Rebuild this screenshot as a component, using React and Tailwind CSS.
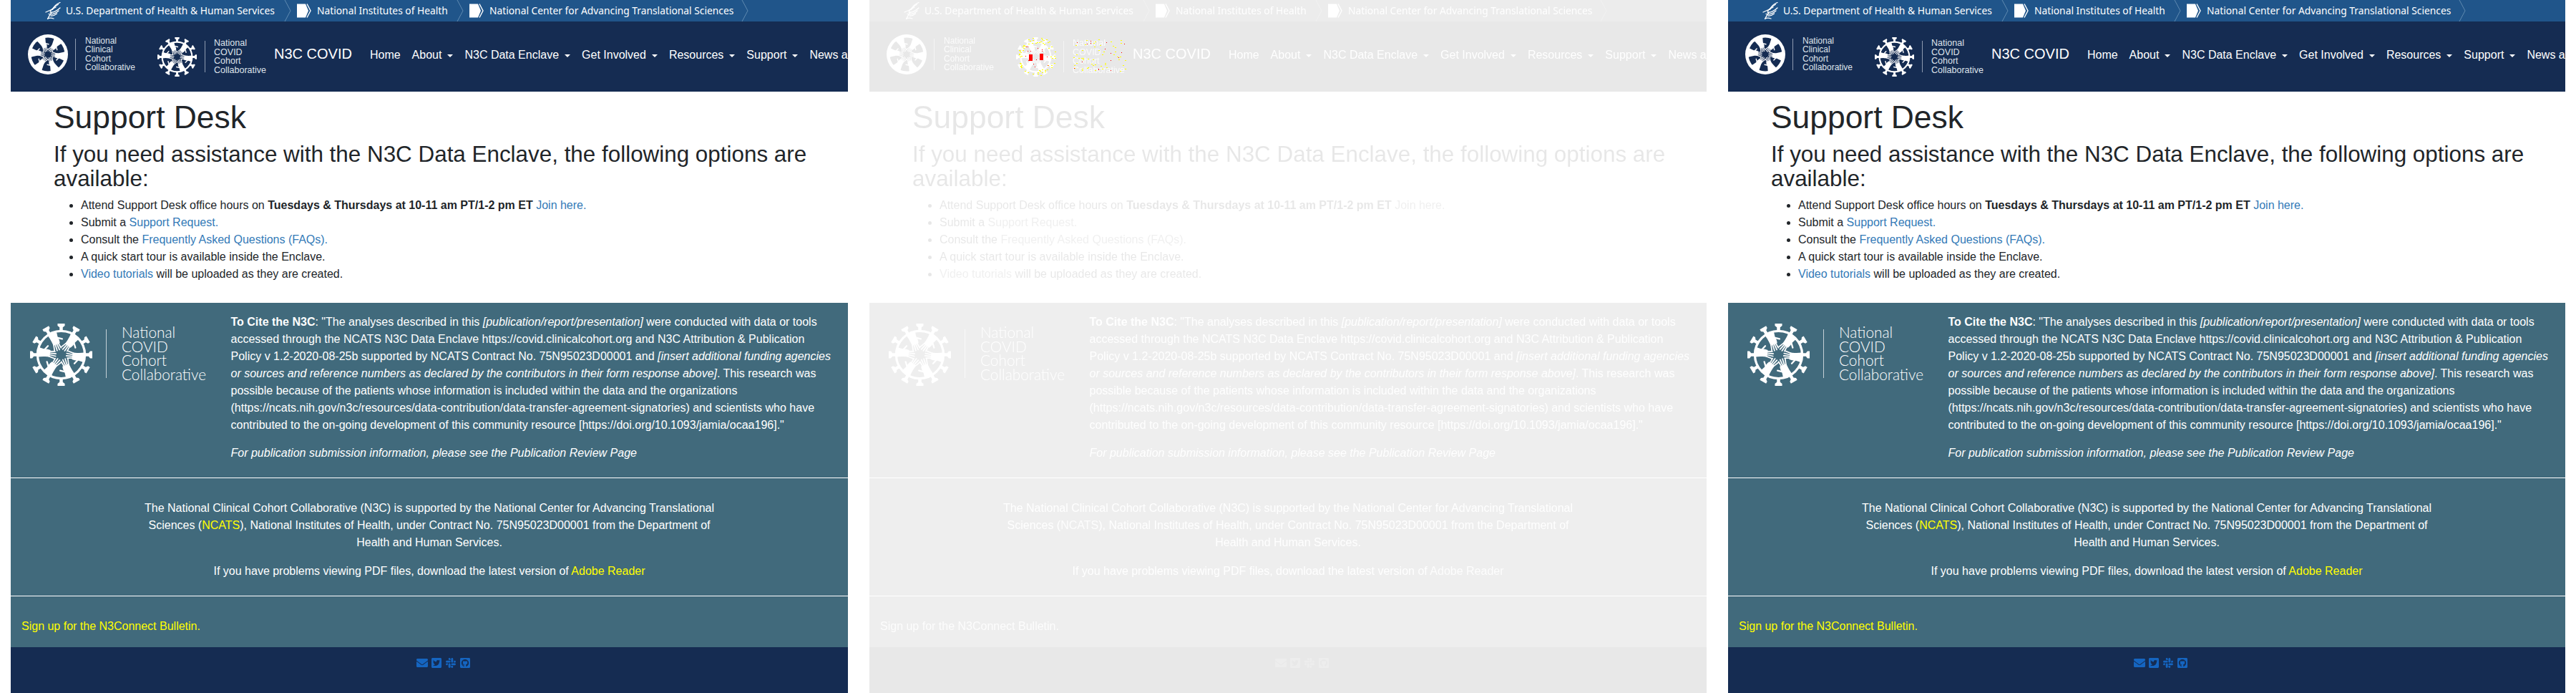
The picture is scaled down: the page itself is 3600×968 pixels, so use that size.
import React from "react";
import { FaEnvelope, FaTwitterSquare, FaSlack, FaGithubSquare } from "react-icons/fa";

const navLinks = [
  { label: "Home" },
  { label: "About", caret: true },
  { label: "N3C Data Enclave", caret: true },
  { label: "Get Involved", caret: true },
  { label: "Resources", caret: true },
  { label: "Support", caret: true },
  { label: "News and Events", caret: true },
];

const Hand = ({ angle, arm }) => (
  <g transform={`rotate(${angle})`}>
    <path d={arm} fill="currentColor" />
    <g stroke="currentColor" strokeWidth="2" strokeLinecap="round" fill="none">
      <path d="M20 -5 L10 -7.5" />
      <path d="M20 -2.5 L8.5 -3.5" />
      <path d="M20 0 L8.5 0.5" />
      <path d="M20 2.5 L10.5 4" />
      <path d="M28 4 L23 11" strokeWidth="2.6" />
    </g>
  </g>
);

const handAngles = [8, 68, 128, 188, 248, 308];

const HandsMark = ({ className }) => (
  <svg viewBox="-50 -50 100 100" className={className}>
    <circle r="50" fill="currentColor" />
    <circle r="42" className="fill-[#152c52]" />
    {handAngles.map((a) => (
      <Hand key={a} angle={a} arm="M46 -15 L46 11 L30 6 Q23 7 18 5 L18 -6 L26 -7 Q36 -10 46 -15 Z" />
    ))}
  </svg>
);

const VirusMark = ({ className }) => {
  const spikes = [0, 30, 60, 90, 120, 150, 180, 210, 240, 270, 300, 330];
  return (
    <svg viewBox="-50 -50 100 100" className={className}>
      <circle r="38" fill="none" stroke="currentColor" strokeWidth="3.8" />
      {spikes.map((a) => (
        <g key={a} transform={`rotate(${a})`} fill="currentColor">
          <path d="M-2.6 -38 L-2.6 -44 L-5.8 -46.5 L-5.8 -50 L5.8 -50 L5.8 -46.5 L2.6 -44 L2.6 -38 Z" />
        </g>
      ))}
      {handAngles.map((a) => (
        <Hand key={a} angle={a} arm="M38 -9 L38 7 L29 5.5 Q22 6.5 18 5 L18 -6 L25 -6.5 Q31 -7 38 -9 Z" />
      ))}
    </svg>
  );
};

const Eagle = () => (
  <svg viewBox="0 0 22 24" className="w-[22px] h-[24px] shrink-0" fill="none" stroke="white" strokeWidth="1.3" strokeLinecap="round">
    <path d="M21 0.5 C16 2.5 12 6 10.5 10.5" />
    <path d="M18.5 3 C14.5 5.5 10 9 7.5 12.5" />
    <path d="M15 7 C11 9.5 6 12 1 14" />
    <path d="M7 14 C11 15 16 12.5 21 8" />
    <path d="M5 16.5 C10 18 15 15.5 19 12" />
    <path d="M8 19 C11 19.5 14 18 16.5 16" />
    <path d="M9 14.5 C6 18 5 21 3.5 23.5" />
    <path d="M4 23 C7 21.5 9 22 12 23" />
  </svg>
);

const NihMark = () => (
  <svg viewBox="0 0 20 20" className="w-[20px] h-[20px] shrink-0">
    <path d="M0 0.5 H12 L16 10 L12 19.5 H0 Z" fill="white" />
    <path d="M14 0.5 L19 10 L14 19.5" fill="none" stroke="white" strokeWidth="1.4" />
  </svg>
);

const Crumb = () => (
  <svg viewBox="0 0 10 30" className="w-[10px] h-[30px] shrink-0 ml-[12px] mr-[8px]">
    <path d="M1 0 L9 15 L1 30" fill="none" stroke="#5f8ab0" strokeWidth="1" />
  </svg>
);

const GovBanner = () => (
  <div className="h-[30px] bg-[#20558a] flex items-center pl-[48px] text-white text-[13.8px] font-['Noto_Sans',sans-serif] whitespace-nowrap overflow-hidden">
    <Eagle />
    <span className="ml-[7px] w-[293px]">U.S. Department of Health &amp; Human Services</span>
    <Crumb />
    <NihMark />
    <span className="ml-[8px] w-[183px]">National Institutes of Health</span>
    <Crumb />
    <NihMark />
    <span className="ml-[8px] w-[340px]">National Center for Advancing Translational Sciences</span>
    <Crumb />
  </div>
);

const LogoText = ({ className }) => (
  <div className={className}>
    <div>National</div>
    <div>COVID</div>
    <div>Cohort</div>
    <div>Collaborative</div>
  </div>
);

const Navbar = () => (
  <div className="h-[98px] bg-[#152c52] flex items-center whitespace-nowrap overflow-hidden text-white">
    {/* clinical logo */}
    <div className="flex items-center ml-[24px] mb-[7px] shrink-0">
      <HandsMark className="w-[56px] h-[56px] text-white" />
      <div className="w-px h-[44px] bg-[#8d9ab0] ml-[10px]" />
      <div className="ml-[13px] text-[12px] leading-[12.5px] text-[#dfe3ea]">
        <div>National</div>
        <div>Clinical</div>
        <div>Cohort</div>
        <div>Collaborative</div>
      </div>
    </div>
    {/* covid logo */}
    <div className="flex items-center ml-[31px] shrink-0">
      <VirusMark className="w-[55px] h-[55px] text-white" />
      <div className="w-px h-[44px] bg-[#8d9ab0] ml-[11px]" />
      <LogoText className="ml-[12px] text-[12.5px] leading-[12.5px] text-[#dfe3ea]" />
    </div>
    <a className="ml-[11px] mb-[8px] text-[20px] leading-[30px] shrink-0">N3C COVID</a>
    <ul className="flex ml-[17px] mb-[4px] text-[16px] leading-[24px]">
      {navLinks.map((link) => (
        <li key={link.label} className="px-[8px] flex items-center">
          {link.label}
          {link.caret && (
            <span className="ml-[8px] mt-[1px] w-0 h-0 border-x-[4.5px] border-x-transparent border-t-[4.5px] border-t-white" />
          )}
        </li>
      ))}
    </ul>
  </div>
);

const SupportDesk = () => (
  <div className="px-[60px] pt-[11.5px] h-[295px] text-[#212529]">
    <h1 className="text-[44.4px] leading-[48px] mb-[11.3px]">Support Desk</h1>
    <h3 className="text-[31.4px] leading-[34px] mb-[8.7px] -mr-[30px]">
      If you need assistance with the N3C Data Enclave, the following options are available:
    </h3>
    <ul className="list-disc pl-[38px] text-[16px] leading-[24px]">
      <li>
        Attend Support Desk office hours on <b>Tuesdays &amp; Thursdays at 10-11 am PT/1-2 pm ET</b>{" "}
        <a className="text-[#337ab7]">Join here.</a>
      </li>
      <li>
        Submit a <a className="text-[#337ab7]">Support Request.</a>
      </li>
      <li>
        Consult the <a className="text-[#337ab7]">Frequently Asked Questions (FAQs).</a>
      </li>
      <li>A quick start tour is available inside the Enclave.</li>
      <li>
        <a className="text-[#337ab7]">Video tutorials</a> will be uploaded as they are created.
      </li>
    </ul>
  </div>
);

const Footer = () => (
  <div className="text-white text-[16px] leading-[24px]">
    <div className="bg-[#416a7c]">
      {/* citation */}
      <div className="h-[244px] grid grid-cols-[307.5px_847.5px] pt-[15px]">
        <div className="flex items-start pl-[27px] pt-[14px]">
          <VirusMark className="w-[87px] h-[87px] text-white shrink-0" />
          <div className="w-px h-[68px] bg-[#c4d0d6] ml-[19px] mt-[8px]" />
          <LogoText className="ml-[21px] mt-[2px] font-['Lato',sans-serif] font-light text-[20.8px] leading-[19.7px]" />
        </div>
        <div>
          <p className="mb-[15px]">
            <b>To Cite the N3C</b>: "The analyses described in this <i>[publication/report/presentation]</i> were
            conducted with data or tools accessed through the NCATS N3C Data Enclave https://covid.clinicalcohort.org
            and N3C Attribution &amp; Publication Policy v 1.2-2020-08-25b supported by NCATS Contract No. 75N95023D00001
            and <i>[insert additional funding agencies or sources and reference numbers as declared by the contributors
            in their form response above]</i>. This research was possible because of the patients whose information is
            included within the data and the organizations
            (https://ncats.nih.gov/n3c/resources/data-contribution/data-transfer-agreement-signatories) and scientists
            who have contributed to the on-going development of this community resource
            [https://doi.org/10.1093/jamia/ocaa196]."
          </p>
          <p>
            <i>For publication submission information, please see the Publication Review Page</i>
          </p>
        </div>
      </div>
      {/* funding */}
      <div className="border-t border-white h-[165px] pt-[30px] text-center">
        <p className="w-[810px] mx-auto mb-[16px]">
          The National Clinical Cohort Collaborative (N3C) is supported by the National Center for Advancing
          Translational Sciences (<a className="text-[#ffff00]">NCATS</a>), National Institutes of Health, under
          Contract No. 75N95023D00001 from the Department of Health and Human Services.
        </p>
        <p>
          If you have problems viewing PDF files, download the latest version of{" "}
          <a className="text-[#ffff00]">Adobe Reader</a>
        </p>
      </div>
      {/* bulletin */}
      <div className="border-t border-white h-[72px] pt-[30px] pl-[15px]">
        <a className="text-[#ffff00]">Sign up for the N3Connect Bulletin.</a>
      </div>
    </div>
    {/* socials */}
    <div className="h-[64px] bg-[#152c52] flex justify-center items-start pl-[40px] pt-[14px] gap-[4px] text-[#1565c0] text-[16px]">
      <FaEnvelope />
      <FaTwitterSquare />
      <FaSlack />
      <FaGithubSquare />
    </div>
  </div>
);

// stray yellow and red pixels that sit over the covid logo in the faded copy
const scatter = (count, seed, x, y, w, h) => {
  const dots = [];
  let s = seed;
  for (let i = 0; i < count; i++) {
    s = (s * 1103515245 + 12345) % 2147483648;
    const a = (s >> 8) % w;
    s = (s * 1103515245 + 12345) % 2147483648;
    const b = (s >> 8) % h;
    dots.push({ x: x + a, y: y + b });
  }
  return dots;
};

const onRing = (d) => {
  const r = Math.hypot(d.x - 27, d.y - 27);
  return r > 19 && r < 28;
};

const yellowDots = [...scatter(160, 7, 0, 0, 55, 55).filter(onRing), ...scatter(50, 21, 79, 2, 74, 46)];
const redDots = [...scatter(16, 33, 10, 12, 34, 30), ...scatter(16, 51, 80, 3, 72, 44)];

const Glitch = () => (
  <svg viewBox="0 0 155 56" className="absolute left-[221px] top-[52px] w-[155px] h-[56px]">
    {yellowDots.map((d, i) => (
      <rect key={i} x={d.x} y={d.y} width="2" height="1" fill="#ffff00" />
    ))}
    {redDots.map((d, i) => (
      <rect key={i} x={d.x} y={d.y} width="1" height="1" fill="#ff0000" />
    ))}
    <rect x="17" y="24" width="5" height="9" fill="#ff0000" />
    <rect x="32" y="23" width="5" height="9" fill="#ff0000" />
  </svg>
);

const Panel = ({ faded }) => (
  <div className="relative w-[1200px] px-[15px] shrink-0">
    <div className={faded ? "opacity-10 grayscale" : ""}>
      <GovBanner />
      <Navbar />
      <SupportDesk />
      <Footer />
    </div>
    {faded && <Glitch />}
  </div>
);

const App = () => {
  return (
    <div className="flex w-[3600px] h-[968px] overflow-hidden bg-white font-['Liberation_Sans',Arial,sans-serif]">
      <Panel />
      <Panel faded />
      <Panel />
    </div>
  );
};

export default App;
